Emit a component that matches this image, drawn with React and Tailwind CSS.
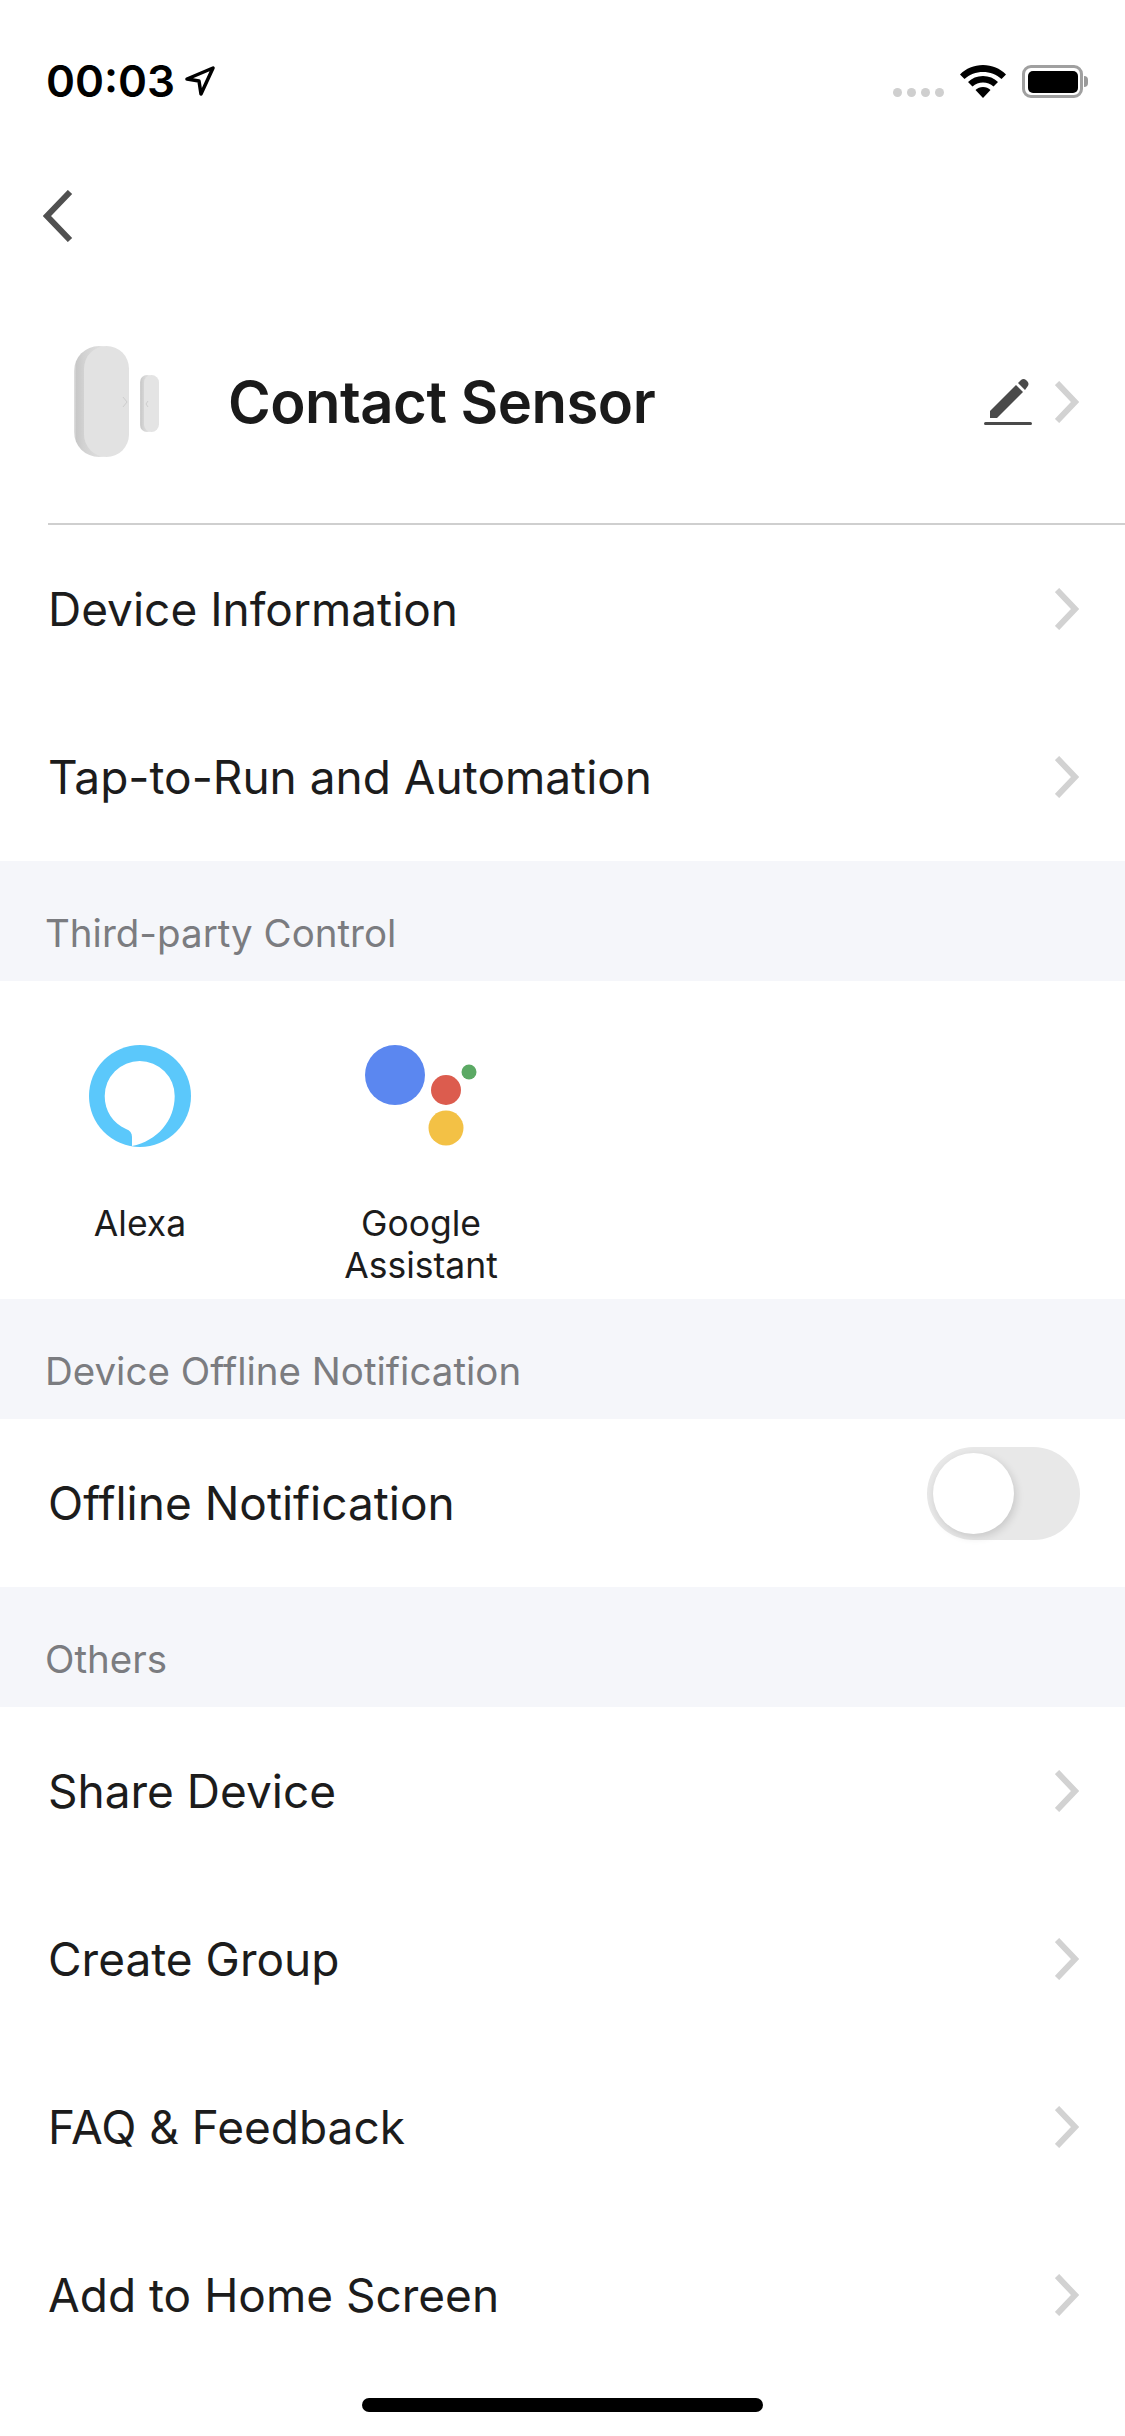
import { Fragment } from 'react';

function Chevron() {
  return (
    <svg width="24" height="42" viewBox="0 0 24 42" fill="none" stroke="#d2d2d2" strokeWidth="6" aria-hidden>
      <polyline points="2,2 20,21 2,40" />
    </svg>
  );
}

function Row({ label }) {
  return (
    <div className="flex h-[168px] items-center justify-between pl-[48px] pr-[46px]">
      <span className="text-[46px] leading-none text-[#1c1c1c]">{label}</span>
      <Chevron />
    </div>
  );
}

function SectionHead({ label }) {
  return (
    <div className="flex h-[120px] items-end bg-[#f5f6fa] pb-[25px] pl-[45px]">
      <span className="text-[38.5px] leading-[46px] text-[#7b7c80]">{label}</span>
    </div>
  );
}

function StatusBar() {
  return (
    <div className="flex h-[132px] items-start justify-between pl-[46px] pr-[34px] pt-[58px]">
      <div className="flex items-center gap-[10px]">
        <span className="text-[44px] font-semibold leading-[46px] text-black">00:03</span>
        <svg width="30" height="30" viewBox="0 0 30 30" fill="none" stroke="#000" strokeWidth="3.5" strokeLinejoin="round" aria-hidden>
          <path d="M2 13 L28 2 L16 28 L14 15 Z" />
        </svg>
      </div>
      <div className="flex items-end gap-[16px] pt-[7px] pr-[3px]">
        <div className="mb-[1px] flex gap-[5px]">
          {[0, 1, 2, 3].map(i => (
            <span key={i} className="h-[9px] w-[9px] rounded-full bg-[#cfcfcf]" />
          ))}
        </div>
        <svg width="46" height="33" viewBox="0 0 46 33" aria-hidden>
          <path d="M23 0 C32 0 40 3.5 46 9.5 L41.5 14 C36.5 9.5 30 7 23 7 C16 7 9.5 9.5 4.5 14 L0 9.5 C6 3.5 14 0 23 0 Z" fill="#000" />
          <path d="M23 11 C29 11 34 13 38 17 L33.5 21.5 C30.5 19 27 17.5 23 17.5 C19 17.5 15.5 19 12.5 21.5 L8 17 C12 13 17 11 23 11 Z" fill="#000" />
          <path d="M23 22 C26 22 28.5 23 30.5 25 L23 33 L15.5 25 C17.5 23 20 22 23 22 Z" fill="#000" />
        </svg>
        <div className="flex items-center gap-[1px]">
          <div className="flex h-[33px] w-[61px] items-center justify-center rounded-[9px] border-[3px] border-[#a0a0a0]">
            <div className="h-[22px] w-[50px] rounded-[5px] bg-black" />
          </div>
          <div className="h-[11px] w-[4px] rounded-r-full bg-[#9a9a9a]" />
        </div>
      </div>
    </div>
  );
}

function SensorIcon() {
  return (
    <svg width="90" height="114" viewBox="0 0 90 114" aria-hidden>
      <defs>
        <linearGradient id="edge" x1="0" y1="0" x2="1" y2="0">
          <stop offset="0" stopColor="#e0e0e0" />
          <stop offset="0.05" stopColor="#c8c8c8" />
          <stop offset="0.2" stopColor="#d2d2d2" />
          <stop offset="1" stopColor="#f0f0f0" />
        </linearGradient>
      </defs>
      <rect x="0" y="1" width="50" height="111" rx="25" fill="url(#edge)" />
      <rect x="10" y="1" width="45" height="111" rx="22.5" fill="#e2e2e2" />
      <polyline points="49,52 53,57 49,62" fill="none" stroke="#cdcdcd" strokeWidth="1" />
      <rect x="66" y="30" width="14" height="57" rx="7" fill="url(#edge)" />
      <rect x="70" y="30" width="15" height="57" rx="7.5" fill="#e4e4e4" />
      <polyline points="74,56 72,59 74,62" fill="none" stroke="#cdcdcd" strokeWidth="1" />
    </svg>
  );
}

function AlexaIcon() {
  return (
    <svg width="102" height="102" viewBox="0 0 102 102" aria-hidden>
      <circle cx="51" cy="51" r="51" fill="#5bc8fb" />
      <path
        d="M85.7 51 A35 35 0 0 0 15.7 51 C15.7 66 24 78 37 84 C41 85.5 43 88 43 92 L43 101 C68 96 85.7 76 85.7 51 Z"
        fill="#fff"
      />
    </svg>
  );
}

function AssistantIcon() {
  return (
    <svg width="112" height="102" viewBox="0 0 112 102" aria-hidden>
      <circle cx="30" cy="30" r="30" fill="#5b87f0" />
      <circle cx="81" cy="45" r="15" fill="#dc5c4e" />
      <circle cx="104" cy="27" r="7.5" fill="#5ba964" />
      <circle cx="81" cy="83" r="17.5" fill="#f3c145" />
    </svg>
  );
}

function Toggle() {
  return (
    <div className="mb-[19px] flex h-[93px] w-[153px] items-center rounded-full bg-[#e8e8e8] pl-[6px]">
      <div className="h-[81px] w-[81px] rounded-full bg-white shadow-[2px_3px_8px_rgba(0,0,0,0.14)]" />
    </div>
  );
}

export default function App() {
  return (
    <div className="relative h-[2436px] w-[1125px] overflow-hidden bg-white font-['Inter',sans-serif]">
      <StatusBar />

      <div className="flex h-[168px] items-center pl-[43px]">
        <svg width="30" height="52" viewBox="0 0 30 52" fill="none" stroke="#505050" strokeWidth="6" aria-hidden>
          <polyline points="27,2 4,26 27,50" />
        </svg>
      </div>

      <div className="ml-[48px] flex h-[225px] items-center justify-between border-b-2 border-[#cfcfcf] pb-[19px] pr-[46px]">
        <div className="flex items-center">
          <div className="ml-[26px] flex w-[154px]">
            <SensorIcon />
          </div>
          <span className="text-[58px] font-semibold leading-none tracking-[-0.5px] text-[#1a1a1a]">Contact Sensor</span>
        </div>
        <div className="flex items-center gap-[23px]">
          <svg className="mb-[3px]" width="48" height="48" viewBox="0 0 48 48" aria-hidden>
            <path d="M6 41 L6 34 L32 8 L39 15 L13 41 Z" fill="#4a4a4a" />
            <path d="M34 6 L37 3 Q39.5 1 42 3 L43.5 4.5 Q45.5 7 43.5 9.5 L41 13 Z" fill="#4a4a4a" />
            <rect x="0" y="45" width="48" height="3" rx="1.5" fill="#4a4a4a" />
          </svg>
          <Chevron />
        </div>
      </div>

      <Row label="Device Information" />
      <Row label="Tap-to-Run and Automation" />

      <SectionHead label="Third-party Control" />
      <div className="flex h-[318px] pl-[89px] pt-[64px]">
        <div className="flex w-[280px] flex-col items-start">
          <AlexaIcon />
          <span className="-ml-[4px] mt-[56px] w-[110px] text-center text-[35.5px] leading-[42px] text-[#1c1c1c]">Alexa</span>
        </div>
        <div className="-ml-[48px] flex w-[200px] flex-col items-center">
          <div className="h-[102px] w-[112px]">
            <AssistantIcon />
          </div>
          <span className="mt-[56px] text-center text-[35.5px] leading-[42px] text-[#1c1c1c]">
            {['Google', 'Assistant'].map(line => (
              <Fragment key={line}>
                {line}
                <br />
              </Fragment>
            ))}
          </span>
        </div>
      </div>

      <SectionHead label="Device Offline Notification" />
      <div className="flex h-[168px] items-center justify-between pl-[48px] pr-[45px]">
        <span className="text-[46px] leading-none text-[#1c1c1c]">Offline Notification</span>
        <Toggle />
      </div>

      <SectionHead label="Others" />
      <Row label="Share Device" />
      <Row label="Create Group" />
      <Row label="FAQ &amp; Feedback" />
      <Row label="Add to Home Screen" />

      <div className="absolute bottom-[24px] left-[362px] h-[14px] w-[401px] rounded-full bg-black" />
    </div>
  );
}
